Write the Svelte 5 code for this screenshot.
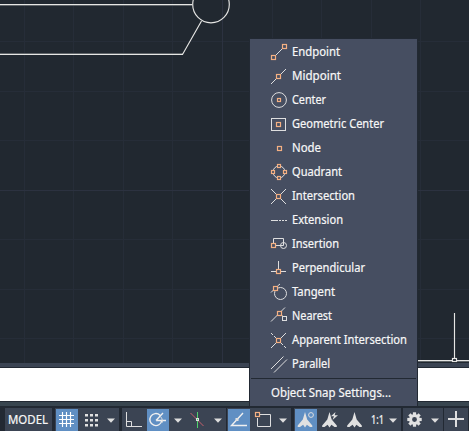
<script>
  const snaps = [
    ['Endpoint', 'endpoint', 48], ['Midpoint', 'midpoint', 49], ['Center', 'center', 34],
    ['Geometric Center', 'geometric', 92], ['Node', 'node', 29], ['Quadrant', 'quadrant', 50],
    ['Intersection', 'intersection', 63], ['Extension', 'extension', 51], ['Insertion', 'insertion', 47],
    ['Perpendicular', 'perpendicular', 73], ['Tangent', 'tangent', 43], ['Nearest', 'nearest', 40],
    ['Apparent Intersection', 'apparent', 115], ['Parallel', 'parallel', 38]
  ];
  const columns = [24.5, 73.5, 123.5, 172.5, 272.5, 321.5, 371.5, 420.5];
  const rows = [41.5, 91.5, 140.5, 239.5, 289.5, 338.5];
</script>

{#snippet box(x, y, s = 4)}
  <rect {x} {y} width={s} height={s} class="snap" />
{/snippet}

{#snippet caret()}
  <svg class="caret" width="8" height="5" viewBox="0 0 8 5"><path d="M0 .5h8L4 4.7z" /></svg>
{/snippet}

{#snippet compass()}
  <path class="solid" d="M7.5 2L9.7 9.5L14.8 15.4V17H12.5L9.4 14.8L7.5 17.5L5.6 14.8L2.5 17H.2V15.4L5.3 9.5Z" />
{/snippet}

<div class="app">
  <div class="drawing">
    <svg width="469" height="363" viewBox="0 0 469 363">
      <g class="minor">
        {#each columns as x}<path d="M{x} 0V363" />{/each}
        {#each rows as y}<path d="M0 {y}H469" />{/each}
      </g>
      <path class="major" d="M222.5 0V363M0 190.5H469" />
      <g class="under"><path d="M0 5.5H192M0 53.5H183M417 361.5H469" /></g>
      <g class="shape">
        <path d="M0 4.5H192M0 54.5H182.5L201.5 21" />
        <circle cx="211" cy="4.5" r="18.3" />
        <path d="M417 360.5H469M454.5 313V358" />
        <rect x="452.5" y="358.5" width="4" height="3" class="grip" />
      </g>
    </svg>
  </div>
  <div class="strip upper"></div>
  <div class="command"></div>
  <div class="strip lower"></div>

  <div class="status">
    <div class="group model"><svg width="42" height="18"><text x="0" y="13" textLength="40" lengthAdjust="spacingAndGlyphs">MODEL</text></svg></div>
    <div class="group gridgroup">
      <div class="tool active"><svg width="22" height="22" viewBox="0 0 22 22"><path class="line bright" d="M6.5 3V18M10.5 3V18M14.5 3V18M3 6.5H18M3 10.5H18M3 14.5H18" /></svg></div>
      <div class="tool"><svg width="24" height="22" viewBox="0 0 24 22">
        {#each [5, 10, 15] as y}{#each [7, 12, 17] as x}<rect {x} {y} width="3" height="2.5" class="solid" />{/each}{/each}
      </svg></div>
      <div class="drop">{@render caret()}</div>
    </div>
    <div class="group tracking">
      <div class="tool ortho"><svg width="25" height="22" viewBox="0 0 25 22"><path class="line" d="M4.5 3V17.5H20M4.5 12.5H9.5V17" /></svg></div>
      <div class="tool active"><svg width="22" height="22" viewBox="0 0 22 22"><path class="line wide" d="M13 6.2A6 6 0 1 0 14.8 11.5M9 11.5L16 4M9 11.5H19" /><path class="line" d="M13.5 7.5Q15.4 9 15.5 13.5" /></svg></div>
      <div class="drop near">{@render caret()}</div>
      <div class="tool cursor"><svg width="24" height="22" viewBox="0 0 24 22"><path d="M5.5 4L18.5 17" stroke="#c4606c" /><path d="M12.5 3V19" stroke="#50d06b" /><rect x="11.5" y="9.5" width="2" height="2" class="line" /></svg></div>
      <div class="drop">{@render caret()}</div>
    </div>
    <div class="group snapping">
      <div class="tool active"><svg width="22" height="22" viewBox="0 0 22 22"><path class="line wide" d="M15 4L3.5 16.5H19" /><rect x="7.5" y="9" width="3" height="3" class="solid" /></svg></div>
      <div class="tool"><svg width="24" height="22" viewBox="0 0 24 22"><path class="line" d="M10 5.5H20.5V17.5H7.5V9" />{@render box(5.5, 3.5)}</svg></div>
      <div class="drop end">{@render caret()}</div>
    </div>
    <div class="group annotation">
      <div class="tool active"><svg width="22" height="22" viewBox="0 0 22 22"><g transform="translate(2.5 1)">{@render compass()}</g><circle cx="16" cy="6" r="2.4" class="line" /></svg></div>
      <div class="tool"><svg width="26" height="22" viewBox="0 0 26 22"><g transform="translate(5 1)">{@render compass()}</g><path class="solid" d="M18.5 3L14 7.2H17L15.5 11L21 6.2H17.7Z" /></svg></div>
      <div class="tool"><svg width="24" height="22" viewBox="0 0 24 22"><g transform="translate(4 1)">{@render compass()}</g></svg></div>
      <div class="scale"><svg width="16" height="18"><text x="0" y="13" textLength="13" lengthAdjust="spacingAndGlyphs">1:1</text></svg>{@render caret()}</div>
    </div>
    <div class="group settings">
      <svg width="15" height="15" viewBox="0 0 16 16">
        <circle cx="8" cy="8" r="4.2" class="ring" />
        {#each [0, 45, 90, 135, 180, 225, 270, 315] as a}<rect x="6.3" y=".3" width="3.4" height="3.3" class="solid" transform="rotate({a} 8 8)" />{/each}
      </svg>
      {@render caret()}
    </div>
    <div class="group plus"><svg width="17" height="17" viewBox="0 0 17 17"><path class="line cross" d="M8 0V16M0 8H16" /></svg></div>
  </div>

  <div class="menu">
    {#each snaps as [label, icon, width]}
      <div class="item">
        <svg class="icon" width="17" height="18" viewBox="0 0 17 18">
          {#if icon === 'endpoint'}
            <path class="line" d="M4.5 12.5L11.5 5.5" />{@render box(.5, 12.5)}{@render box(11.5, 1.5)}
          {:else if icon === 'midpoint'}
            <path class="line" d="M0 17L5.5 11.5M9.5 7.5L15 2" />{@render box(5.5, 7.5)}
          {:else if icon === 'center'}
            <circle class="line" cx="8" cy="9" r="7.4" />{@render box(6.5, 7.5, 3)}
          {:else if icon === 'geometric'}
            <rect class="line" x=".5" y="3.5" width="14" height="12" />{@render box(5.5, 7.5)}
          {:else if icon === 'node'}
            {@render box(6.5, 7.5)}
          {:else if icon === 'quadrant'}
            <circle class="line" cx="8" cy="9" r="6" />
            <g class="cover">{@render box(6.5, 1.5, 3)}{@render box(6.5, 13.5, 3)}{@render box(.5, 7.5, 3)}{@render box(12.5, 7.5, 3)}</g>
          {:else if icon === 'intersection'}
            <path class="line" d="M0 2L5.5 7.5M9.5 11.5L15 17M0 17L5.5 11.5M9.5 7.5L15 2" />{@render box(5.5, 7.5)}
          {:else if icon === 'extension'}
            <path class="line" d="M0 9.5H7M8 9.5H10M11 9.5H13M14 9.5H16" />
          {:else if icon === 'insertion'}
            <path class="line" d="M2.5 8V3.5H12.5V7M5 10.5H12.5V7" /><circle class="line" cx="12.5" cy="10.5" r="3" />{@render box(.5, 8.5)}
          {:else if icon === 'perpendicular'}
            <path class="line" d="M7.5 2V11M0 12.5H5M10 12.5H15" />{@render box(5.5, 10.5)}
          {:else if icon === 'tangent'}
            <circle class="line" cx="9.5" cy="10.5" r="6" /><path class="line" d="M0 9.5L2.5 7M6.5 3L9 1" /><g class="cover">{@render box(2.5, 3.5)}</g>
          {:else if icon === 'nearest'}
            <path class="line" d="M0 14.5L6.5 8M10.5 4L14 .5M10.5 8L12 9.5" /><rect class="line" x="11.5" y="9.5" width="4" height="4" />{@render box(6.5, 4.5)}
          {:else if icon === 'apparent'}
            <path class="line" d="M0 2L2 4M3 5L5.5 7.5M9.5 11.5L12 14M13 15L15 17M0 17L5.5 11.5M9.5 7.5L15 2" />{@render box(5.5, 7.5)}
          {:else}
            <path class="line" d="M0 14L12.5 1.5M3 17.5L16 4.5" />
          {/if}
        </svg>
        <svg class="label" width="122" height="24"><text x="0" y="16" textLength={width} lengthAdjust="spacingAndGlyphs">{label}</text></svg>
      </div>
    {/each}
    <div class="rule"></div>
    <div class="footer"><svg width="124" height="24"><text x="0" y="16" textLength="120" lengthAdjust="spacingAndGlyphs">Object Snap Settings...</text></svg></div>
  </div>
</div>

<style>
  :global(body) { margin: 0; overflow: hidden; }
  .app { position: relative; width: 469px; height: 431px; display: flex; flex-direction: column; background: #222933; font: 12px "Noto Sans", "Open Sans", sans-serif; }
  svg { display: block; flex: none; fill: none; overflow: visible; }
  text { fill: #f7f7f7; font-size: 12px; stroke: #f7f7f7; stroke-width: .2; }
  .drawing { height: 363px; background: #212830; }
  .minor { stroke: #262d38; }
  .major { stroke: #2c3240; }
  .shape { stroke: #e6e6e4; stroke-width: 1.15; }
  .under { stroke: #61666a; }
  .grip { fill: #222933; }
  .strip { height: 4px; background: #3b4453; }
  .upper { border-bottom: 1px solid #222933; }
  .lower { border-top: 1px solid #222933; background: #38454f; }
  .command { height: 33px; background: #fff; }
  .status { display: flex; height: 23px; margin-top: 2px; padding-left: 5px; }
  .group { display: flex; align-items: center; height: 23px; background: #3b4453; box-sizing: border-box; flex: none; }
  .model { width: 47px; margin-right: 3px; padding-left: 3px; }
  .gridgroup { width: 64px; margin-right: 3px; padding-left: 1px; }
  .tracking { width: 104px; margin-right: 1px; }
  .snapping { width: 64px; margin-right: 3px; padding-left: 1px; }
  .annotation { width: 107px; margin-right: 2px; padding-left: 1px; }
  .settings { width: 40px; margin-right: 1px; padding-left: 4px; gap: 9px; }
  .plus { width: 24px; padding-left: 4px; }
  .tool { height: 22px; margin-top: 1px; }
  .active { width: 22px; background: #608fc3; }
  .drop { padding-left: 5px; }
  .cursor { padding-left: 3px; }
  .caret { fill: #dedede; margin-top: 1px; }
  .line { stroke: #dededf; }
  .bright { stroke: #fff; stroke-width: 1.15; }
  .wide { stroke: #f0f0f0; stroke-width: 1.4; }
  .cross { stroke-width: 2; }
  .solid { fill: #e1e1e1; }
  .ring { stroke: #e1e1e1; stroke-width: 3.2; }
  .snap { stroke: #f4b083; stroke-width: 1.2; }
  .cover :global(rect) { fill: #464e61; }
  .scale { display: flex; align-items: center; gap: 2px; padding-left: 4px; }
  .menu { position: absolute; left: 249px; top: 38px; width: 169px; height: 368px; box-sizing: border-box; background: #464e61; border: solid #222933; border-width: 1px 1px 0 1px; padding-top: 1px; }
  .item { display: flex; height: 24px; padding-left: 21px; gap: 4px; }
  .icon { margin-top: 3px; }
  .rule { height: 1px; margin: 2px 1px 0; background: #222933; }
  .footer { padding: 2px 0 0 21px; }
</style>
